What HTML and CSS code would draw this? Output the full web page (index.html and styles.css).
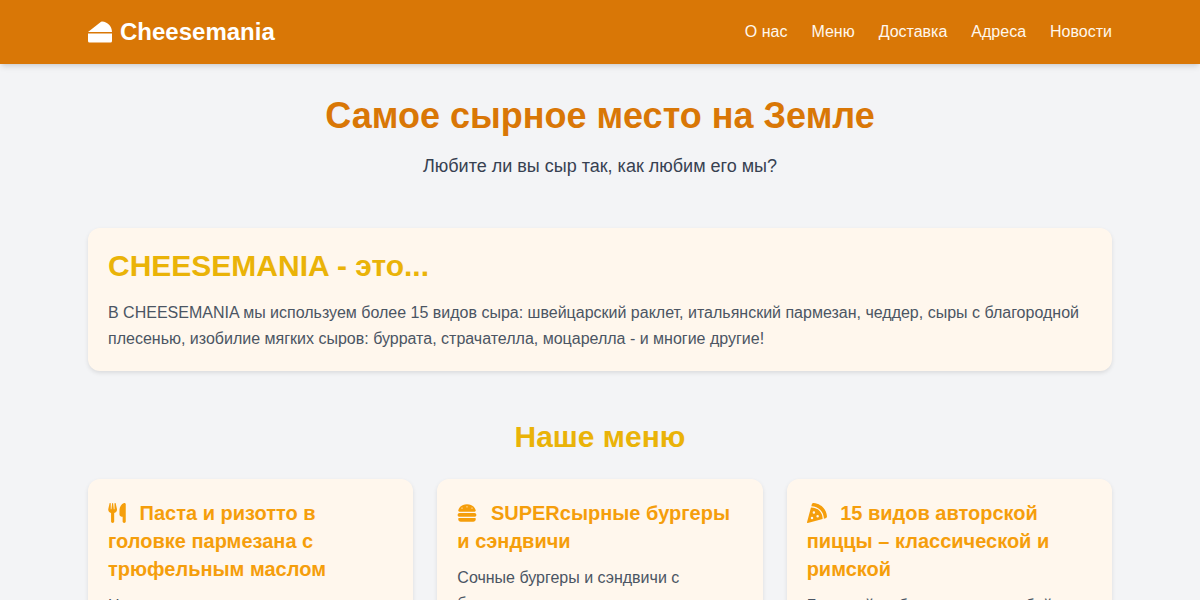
FILE: index.html
```html
<!DOCTYPE html>
<html lang="ru">

<head>
    <meta charset="utf-8">
    <meta name="viewport" content="width=device-width, initial-scale=1">
    <title>Cheesemania</title>
    <link rel="stylesheet" href="styles.css">
</head>

<body>
<header class="header">
    <div class="container header-inner">
        <a href="#" class="logo">
            <svg class="logo-icon" viewBox="0 0 512 512" aria-hidden="true"><path d="M0 288v160a32 32 0 0 0 32 32h448a32 32 0 0 0 32-32V288zM299.83 32a32 32 0 0 0-21.13 7L0 256h512c0-119.89-94-217.8-212.17-224z"/></svg>
            <span>Cheesemania</span>
        </a>
        <nav class="nav">
            <a href="#about">О нас</a>
            <a href="#menu">Меню</a>
            <a href="#delivery">Доставка</a>
            <a href="#address">Адреса</a>
            <a href="#news">Новости</a>
        </nav>
    </div>
</header>

<main class="container main">
    <!-- Заголовок -->
    <section class="hero">
        <h1>Самое сырное место на Земле</h1>
        <p>Любите ли вы сыр так, как любим его мы?</p>
    </section>

    <!-- О нас -->
    <section class="card about" id="about">
        <h2>CHEESEMANIA - это...</h2>
        <p>В CHEESEMANIA мы используем более 15 видов сыра: швейцарский раклет, итальянский пармезан, чеддер, сыры с благородной плесенью, изобилие мягких сыров: буррата, страчателла, моцарелла - и многие другие!</p>
    </section>

    <!-- Меню -->
    <section class="menu" id="menu">
        <h2>Наше меню</h2>
        <div class="menu-grid">
            <div class="card">
                <h3>
                    <svg class="icon icon-narrow" viewBox="0 0 448 512" aria-hidden="true"><path d="M221.6 148.7C224.7 161.3 224.8 174.5 222.1 187.2C219.3 200 213.6 211.9 205.6 222.1C191.1 238.6 173 249.1 152 254.1V472C152 482.6 147.8 492.8 140.3 500.3C132.8 507.8 122.6 512 112 512C101.4 512 91.2 507.8 83.7 500.3C76.2 492.8 72 482.6 72 472V254.1C51 250.1 32 238.9 18.3 222.4C10.2 212.2 4.5 200.3 1.8 187.5C-1 174.7-.8 161.5 2.3 148.8L32.5 12.5C33.4 8.6 35.6 5.2 38.8 2.9C42 .6 46-.4 49.9 0C53.8 .4 57.5 2.3 60.1 5.3C62.7 8.2 64.2 12 64.2 16V160H81.5L98.6 11.9C99 8.6 100.6 5.6 103.1 3.4C105.5 1.2 108.7 0 112 0C115.3 0 118.5 1.2 120.9 3.4C123.4 5.6 125 8.6 125.4 11.9L142.5 160H160V16C160 12 161.4 8.3 164 5.3C166.6 2.4 170.2 .5 174.1 0C178-.4 182 .6 185.2 2.9C188.4 5.3 190.6 8.7 191.5 12.6L221.6 148.7zM448 472C448 482.6 443.8 492.8 436.3 500.3C428.8 507.8 418.6 512 408 512C397.4 512 387.2 507.8 379.7 500.3C372.2 492.8 368 482.6 368 472V352H351.2C342.8 352 334.4 350.3 326.6 347.1C318.9 343.8 311.8 339.1 305.8 333.1C299.9 327.1 295.2 320 292 312.2C288.8 304.4 287.2 296 287.2 287.6L288 173.8C288 136.9 299.1 100.8 319.8 70.3C340.5 39.7 369.8 16.1 404.1 2.3C409 .4 414.2-.3 419.4 .2C424.6 .8 429.6 2.6 433.9 5.5C438.2 8.5 441.8 12.4 444.2 17C446.7 21.6 448 26.8 448 32V472z"/></svg>
                    Паста и ризотто в головке пармезана с трюфельным маслом
                </h3>
                <p>Насыщенные сливочные вкусы.</p>
            </div>
            <div class="card">
                <h3>
                    <svg class="icon" viewBox="0 0 512 512" aria-hidden="true"><path d="M61.1 224C45 224 32 211 32 194.9c0-1.9 .2-3.7 .6-5.6C37.9 168.3 78.8 32 256 32s218.1 136.3 223.4 157.3c.5 1.9 .6 3.7 .6 5.6c0 16.1-13 29.1-29.1 29.1H61.1zM144 128a16 16 0 1 0 -32 0 16 16 0 1 0 32 0zm240 16a16 16 0 1 0 0-32 16 16 0 1 0 0 32zM272 96a16 16 0 1 0 -32 0 16 16 0 1 0 32 0zM16 304c0-26.5 21.5-48 48-48H448c26.5 0 48 21.5 48 48s-21.5 48-48 48H64c-26.5 0-48-21.5-48-48zm16 96c0-8.8 7.2-16 16-16H464c8.8 0 16 7.2 16 16v16c0 35.3-28.7 64-64 64H96c-35.3 0-64-28.7-64-64V400z"/></svg>
                    SUPERсырные бургеры и сэндвичи
                </h3>
                <p>Сочные бургеры и сэндвичи с большим количеством сыра.</p>
            </div>
            <div class="card">
                <h3>
                    <svg class="icon" viewBox="0 0 512 512" aria-hidden="true"><path d="M169.7 .9c-22.8-1.6-41.9 14-47.5 34.7L110.4 80c.5 0 1.1 0 1.6 0c176.7 0 320 143.3 320 320c0 .5 0 1.1 0 1.6l44.4-11.8c20.8-5.5 36.3-24.7 34.7-47.5C498.5 159.5 352.5 13.5 169.7 .9zM399.8 410.2c.1-3.4 .2-6.8 .2-10.2c0-159.1-128.9-288-288-288c-3.4 0-6.8 .1-10.2 .2L.5 491.9c-1.5 5.5 .1 11.4 4.1 15.4s9.9 5.6 15.4 4.1L399.8 410.2zM176 208a32 32 0 1 1 0 64 32 32 0 1 1 0-64zm64 128a32 32 0 1 1 64 0 32 32 0 1 1 -64 0zM96 384a32 32 0 1 1 64 0 32 32 0 1 1 -64 0z"/></svg>
                    15 видов авторской пиццы – классической и римской
                </h3>
                <p>Большой выбор пиццы на любой вкус.</p>
            </div>
        </div>
    </section>
</main>
</body>

</html>
```
FILE: styles.css
```css
* {
    margin: 0;
    padding: 0;
    box-sizing: border-box;
}

body {
    font-family: "Liberation Sans", Arial, sans-serif;
    font-size: 16px;
    line-height: 1.6;
    color: #4b5563;
    background-color: #f3f4f6;
}

a {
    text-decoration: none;
}

.container {
    max-width: 1024px;
    margin: 0 auto;
}

.header {
    background-color: #d97706;
    box-shadow: 0 4px 6px -1px rgba(0, 0, 0, 0.1), 0 2px 4px -2px rgba(0, 0, 0, 0.1);
}

.header-inner {
    display: flex;
    align-items: center;
    justify-content: space-between;
    padding: 16px 0;
}

.logo {
    display: flex;
    align-items: center;
    gap: 8px;
    font-size: 24px;
    font-weight: bold;
    line-height: 32px;
    color: #fff;
}

.logo-icon {
    width: 24px;
    height: 24px;
    fill: currentColor;
}

.nav {
    display: flex;
    gap: 24px;
}

.nav a {
    color: #fff7ed;
}

.nav a:hover {
    color: #fff;
}

.main {
    padding: 32px 0;
}

.hero {
    margin-bottom: 48px;
    text-align: center;
}

.hero h1 {
    margin-bottom: 16px;
    font-size: 36px;
    line-height: 40px;
    color: #d97706;
}

.hero p {
    font-size: 18px;
    line-height: 28px;
    color: #374151;
}

.card {
    padding: 20px;
    border-radius: 12px;
    background-color: #fff7ed;
    box-shadow: 0 2px 4px rgba(0, 0, 0, 0.1);
}

.about {
    margin-bottom: 48px;
}

.about h2,
.menu h2 {
    font-size: 30px;
    line-height: 36px;
    color: #eab308;
}

.about h2 {
    margin-bottom: 16px;
}

.menu h2 {
    margin-bottom: 24px;
    text-align: center;
}

.menu-grid {
    display: grid;
    grid-template-columns: repeat(3, 1fr);
    gap: 24px;
}

.menu-grid h3 {
    margin-bottom: 10px;
    font-size: 20px;
    line-height: 28px;
    color: #f59e0b;
}

.icon {
    width: 20px;
    height: 20px;
    margin-right: 8px;
    vertical-align: -3px;
    fill: currentColor;
}

.icon-narrow {
    width: 18px;
}
```
